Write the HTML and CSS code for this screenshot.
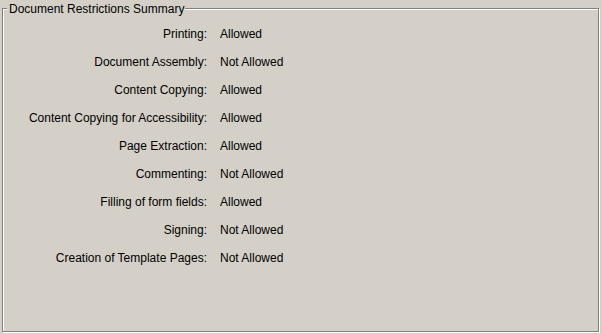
FILE: index.html
```html
<html>
  <head>
    <title>Document Restrictions Summary</title>
    <link rel="stylesheet" href="styles.css">
  </head>
  <body>
    <div class="group">
      <span class="group-title">Document Restrictions Summary</span>
      <div class="summary">
        <span class="label">Printing:</span><span class="value">Allowed</span>
        <span class="label">Document Assembly:</span><span class="value">Not Allowed</span>
        <span class="label">Content Copying:</span><span class="value">Allowed</span>
        <span class="label">Content Copying for Accessibility:</span><span class="value">Allowed</span>
        <span class="label">Page Extraction:</span><span class="value">Allowed</span>
        <span class="label">Commenting:</span><span class="value">Not Allowed</span>
        <span class="label">Filling of form fields:</span><span class="value">Allowed</span>
        <span class="label">Signing:</span><span class="value">Not Allowed</span>
        <span class="label">Creation of Template Pages:</span><span class="value">Not Allowed</span>
      </div>
    </div>
  </body>
</html>
```

FILE: styles.css
```css
html { background:#d4d0c8; }
body
{
  margin:0;
  padding:8px 0 0 2px;
  font-family:"Liberation Sans", Arial, sans-serif;
  font-size:12px;
  color:#000;
}

.group
{
  position:relative;
  box-sizing:border-box;
  width:597px;
  height:324px;
  border:1px solid #808080;
  box-shadow:inset 1px 1px 0 #fff, 1px 1px 0 #fff; /* etched look */
  padding-top:11px;
}

.group-title
{
  position:absolute;
  left:4px;
  top:-7px;
  padding:0 1px 0 2px;
  line-height:14px;
  background:#d4d0c8;
}

.summary
{
  display:grid;
  grid-template-columns:204px auto;
  column-gap:13px;
  grid-auto-rows:28px;
  line-height:28px;
  white-space:nowrap;
}
.summary .label { text-align:right; }
```
